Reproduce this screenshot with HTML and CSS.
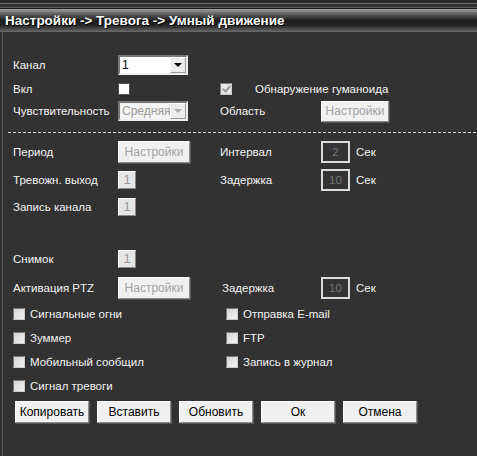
FILE: index.html
```html
<!DOCTYPE html>
<html lang="ru">
<head>
    <meta charset="UTF-8">
    <title>Умный движение</title>
    <link rel="stylesheet" href="styles.css">
</head>
<body>
    <div class="topstrip"></div>
    <div class="header">Настройки -&gt; Тревога -&gt; Умный движение</div>
    <div class="panel">
        <div class="row r-chan">
            <span class="lbl">Канал</span>
            <div class="select"><span class="val">1</span><span class="arrow"></span></div>
        </div>
        <div class="row r-on">
            <span class="lbl">Вкл</span>
            <span class="cb white"></span>
            <span class="cb checked"></span>
            <span class="cb-text">Обнаружение гуманоида</span>
        </div>
        <div class="row r-sens">
            <span class="lbl">Чувствительность</span>
            <div class="select disabled"><span class="val">Средняя</span><span class="arrow"></span></div>
            <span class="lbl">Область</span>
            <button class="btn off">Настройки</button>
        </div>
        <div class="dash"></div>
        <div class="row r-period">
            <span class="lbl">Период</span>
            <button class="btn off wide">Настройки</button>
            <span class="lbl">Интервал</span>
            <span class="num">2</span><span class="unit">Сек</span>
        </div>
        <div class="row r-out">
            <span class="lbl">Тревожн. выход</span>
            <span class="mini">1</span>
            <span class="lbl">Задержка</span>
            <span class="num">10</span><span class="unit">Сек</span>
        </div>
        <div class="row r-rec">
            <span class="lbl">Запись канала</span>
            <span class="mini">1</span>
        </div>
        <div class="row r-snap">
            <span class="lbl">Снимок</span>
            <span class="mini">1</span>
        </div>
        <div class="row r-ptz">
            <span class="lbl">Активация PTZ</span>
            <button class="btn off wide">Настройки</button>
            <span class="lbl shift">Задержка</span>
            <span class="num">10</span><span class="unit">Сек</span>
        </div>
        <div class="checks">
            <label class="chk"><span class="cb"></span>Сигнальные огни</label>
            <label class="chk"><span class="cb"></span>Отправка E-mail</label>
            <label class="chk"><span class="cb"></span>Зуммер</label>
            <label class="chk"><span class="cb"></span>FTP</label>
            <label class="chk"><span class="cb"></span>Мобильный сообщил</label>
            <label class="chk"><span class="cb"></span>Запись в журнал</label>
            <label class="chk"><span class="cb"></span>Сигнал тревоги</label>
        </div>
        <div class="actions">
            <button class="btn act">Копировать</button>
            <button class="btn act">Вставить</button>
            <button class="btn act">Обновить</button>
            <button class="btn act">Ок</button>
            <button class="btn act">Отмена</button>
        </div>
    </div>
</body>
</html>
```

FILE: styles.css
```css
body {
    margin: 0;
    width: 477px;
    height: 456px;
    overflow: hidden;
    background: #323232;
    font-family: "Liberation Sans", Arial, sans-serif;
    font-size: 11.5px;
    color: #f2f2f2;
}

.topstrip {
    height: 9px;
    background: linear-gradient(#2a2a2a 0, #2a2a2a 3px, #6a6a6a 3px, #6a6a6a 4px, #333 4px, #333 7px, #5a5a5a 7px, #5a5a5a 8px, #1e1e1e 8px);
}

.header {
    height: 23px;
    line-height: 23px;
    padding-left: 5px;
    background: linear-gradient(#a0a0a0 0%, #5e5e5e 22%, #1c1c1c 50%, #262626 72%, #6c6c6c 100%);
    font-family: "Liberation Sans", Arial, sans-serif;
    font-weight: bold;
    font-size: 13.5px;
    color: #fff;
    text-shadow: 1px 1px 0 #000;
    white-space: nowrap;
}

.panel {
    height: 424px;
    margin-left: 2px;
    border-left: 1px solid #5a5a5a;
    padding-top: 22px;
    box-sizing: border-box;
}

.row {
    display: grid;
    grid-template-columns: 105px 102px 101px auto auto 1fr;
    align-items: center;
    padding-left: 10px;
}

.r-chan { height: 21px; }
.r-on { height: 22px; margin-top: 3px; }
.r-sens { height: 22px; }
.r-period { height: 23px; }
.r-out { height: 23px; margin-top: 5px; }
.r-rec { height: 20px; margin-top: 6px; }
.r-snap { height: 19px; margin-top: 32px; }
.r-ptz { height: 22px; margin-top: 9px; }

.dash {
    height: 1px;
    margin: 10px 0 7px 5px;
    background: repeating-linear-gradient(90deg, #e0e0e0 0, #e0e0e0 3px, transparent 3px, transparent 5px);
}

.lbl {
    white-space: nowrap;
}

.shift {
    padding-left: 2px;
}

.select {
    width: 70px;
    height: 20px;
    box-sizing: border-box;
    background: #fff;
    border: 2px solid;
    border-color: #777 #eee #eee #777;
    display: flex;
    align-items: center;
    color: #000;
    font-size: 12px;
}

.select .val {
    flex: 1;
    padding-left: 2px;
}

.select .arrow {
    width: 16px;
    height: 16px;
    background: #ececec;
    border: 1px solid;
    border-color: #fff #999 #999 #fff;
    box-sizing: border-box;
    position: relative;
}

.select .arrow::after {
    content: "";
    position: absolute;
    left: 3px;
    top: 5px;
    border-left: 4px solid transparent;
    border-right: 4px solid transparent;
    border-top: 4px solid #000;
}

.select.disabled {
    background: #f4f4f4;
    color: #9a9a9a;
}

.select.disabled .arrow::after {
    border-top-color: #aaa;
}

.cb {
    display: inline-block;
    width: 12px;
    height: 12px;
    box-sizing: border-box;
    border: 1px solid #7a7a7a;
    border-right-color: #ccc;
    border-bottom-color: #ccc;
    background: linear-gradient(135deg, #d6d6d6, #f2f2f2);
}

.cb.white {
    background: #fff;
    border: 1px solid #555;
}

.cb.checked {
    position: relative;
    background: #e6e6e6;
}

.cb.checked::after {
    content: "";
    position: absolute;
    left: 3px;
    top: 0;
    width: 3px;
    height: 6px;
    border: solid #9a9a9a;
    border-width: 0 2px 2px 0;
    transform: rotate(40deg);
}

.cb-text {
    grid-column: 4 / 7;
    margin-left: -66px;
}

.btn {
    font-family: "Liberation Sans", Arial, sans-serif;
    font-size: 12px;
    height: 21px;
    padding: 0;
    background: #f0f0f0;
    border: 1px solid;
    border-color: #fff #8a8a8a #8a8a8a #fff;
    box-shadow: 1px 1px 0 #555;
    color: #000;
}

.btn.off {
    width: 68px;
    color: #a2a2a2;
}

.btn.wide {
    width: 72px;
    height: 22px;
}

.mini {
    width: 18px;
    height: 18px;
    box-sizing: border-box;
    background: #e6e6e6;
    border: 1px solid;
    border-color: #fff #888 #888 #fff;
    color: #9a9a9a;
    text-align: center;
    line-height: 16px;
    font-size: 13px;
}

.num {
    width: 29px;
    height: 22px;
    box-sizing: border-box;
    border: 2px solid #dcdcdc;
    background: #343434;
    color: #777;
    text-align: center;
    line-height: 18px;
}

.unit {
    padding-left: 6px;
}

.checks {
    display: grid;
    grid-template-columns: 213px auto;
    grid-auto-rows: 24px;
    padding-left: 10px;
    margin-top: 3px;
}

.chk {
    display: flex;
    align-items: center;
    gap: 5px;
    white-space: nowrap;
}

.actions {
    display: flex;
    gap: 8px;
    padding-left: 12px;
    margin-top: 3px;
}

.btn.act {
    width: 74px;
    height: 22px;
}
```
